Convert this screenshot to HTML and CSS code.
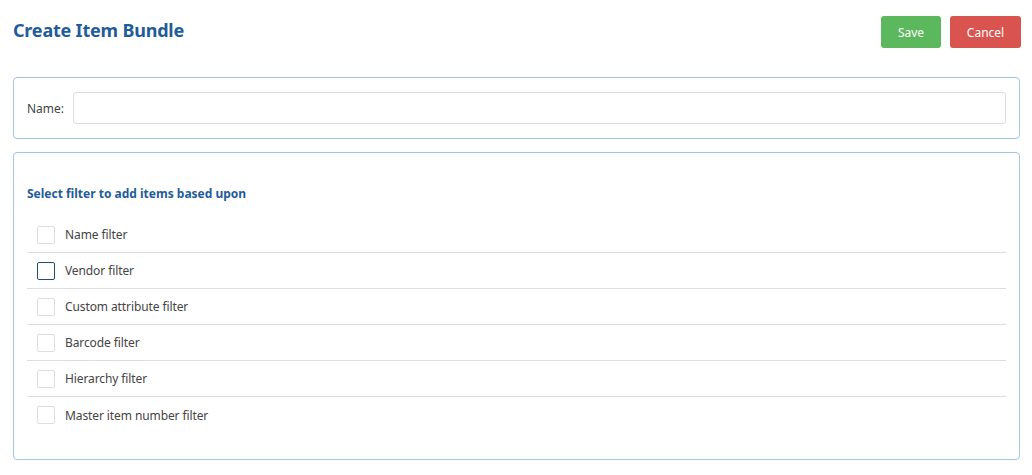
FILE: index.html
```html
<!DOCTYPE html>
<html>
<head>
  <title>Create Item Bundle</title>
  <link rel="stylesheet" href="styles.css">
</head>
<body>
  <div class="header">
    <h1 class="title">Create Item Bundle</h1>
    <div class="actions">
      <button class="btn btn-save">Save</button>
      <button class="btn btn-cancel">Cancel</button>
    </div>
  </div>

  <div class="panel name-panel">
    <label for="name">Name:</label>
    <input type="text" id="name">
  </div>

  <div class="panel filter-panel">
    <h2 class="subtitle">Select filter to add items based upon</h2>
    <ul class="filters">
      <li><span class="check"></span>Name filter</li>
      <li><span class="check active"></span>Vendor filter</li>
      <li><span class="check"></span>Custom attribute filter</li>
      <li><span class="check"></span>Barcode filter</li>
      <li><span class="check"></span>Hierarchy filter</li>
      <li><span class="check"></span>Master item number filter</li>
    </ul>
  </div>
</body>
</html>
```

FILE: styles.css
```css
body {
  font-family: 'Segoe UI', 'Noto Sans', sans-serif;
  font-size: 12px;
  color: #444;
  margin: 0;
  padding: 16px 11px 0 13px;
  background-color: #fff;
}

.header {
  display: flex;
  justify-content: space-between;
  align-items: flex-start;
  height: 61px;
}

.title {
  font-size: 18px;
  font-weight: bold;
  color: #1f5c99;
  margin: 3px 0 0 0;
  line-height: 22px;
  letter-spacing: -0.2px;
}

.actions {
  display: flex;
  gap: 9px;
}

.btn {
  font-family: inherit;
  font-size: 12px;
  color: #fff;
  border: none;
  border-radius: 3px;
  height: 32px;
  cursor: pointer;
}

.btn-save {
  width: 60px;
  background-color: #5cb85c;
}

.btn-cancel {
  width: 71px;
  background-color: #d9534f;
}

.panel {
  border: 1px solid #9fc5e8;
  border-radius: 4px;
  margin-right: 1px;
}

.name-panel {
  display: flex;
  align-items: center;
  padding: 14px 13px;
  margin-bottom: 13px;
}

.name-panel label {
  width: 46px;
}

.name-panel input {
  flex: 1;
  height: 32px;
  box-sizing: border-box;
  border: 1px solid #ddd;
  border-radius: 3px;
  padding: 0 8px;
}

.filter-panel {
  padding: 14px 13px 26px 13px;
}

.subtitle {
  font-size: 12px;
  font-weight: bold;
  color: #1f5c99;
  margin: 18px 0 14px 0;
  line-height: 18px;
}

.filters {
  list-style: none;
  margin: 0;
  padding: 0;
}

.filters li {
  display: flex;
  align-items: center;
  height: 36px;
  box-sizing: border-box;
  padding-left: 10px;
  border-bottom: 1px solid #ddd;
  letter-spacing: -0.1px;
}

.filters li:last-child {
  border-bottom: none;
}

.check {
  width: 18px;
  height: 18px;
  box-sizing: border-box;
  border: 1px solid #ddd;
  border-radius: 2px;
  margin-right: 10px;
}

.check.active {
  border-color: #1f4e79;
}
```
